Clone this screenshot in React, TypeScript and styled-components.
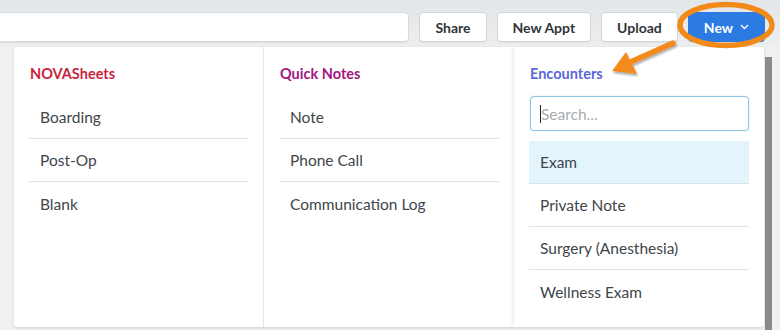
import React from 'react';
import styled, { createGlobalStyle } from 'styled-components';

const GlobalStyle = createGlobalStyle`
  html, body {
    margin: 0;
    padding: 0;
    background: #eef0f2;
  }
  * {
    box-sizing: border-box;
  }
`;

const Page = styled.div`
  width: 780px;
  height: 330px;
  position: relative;
  overflow: hidden;
  background: #eef0f2;
  font-family: Lato, "Liberation Sans", sans-serif;
`;

const Toolbar = styled.div`
  height: 47px;
  padding: 12px 15px 0 0;
  display: flex;
  align-items: flex-start;
  gap: 10px;
  background: linear-gradient(180deg, #e3e6e8 0%, #eceef0 100%);
`;

const SearchBar = styled.div`
  flex: 1;
  height: 30px;
  margin-left: -10px;
  background: #fff;
  border: 1px solid #d6d9dc;
  border-radius: 4px;
  box-shadow: 0 1px 1px rgba(0, 0, 0, 0.06);
`;

const Button = styled.button<{ $primary?: boolean }>`
  height: 30px;
  padding: 0 15px;
  display: flex;
  align-items: center;
  gap: 7px;
  border-radius: 4px;
  border: 1px solid ${(p) => (p.$primary ? '#2a78de' : '#d3d6d9')};
  background: ${(p) => (p.$primary ? '#2b7be2' : '#ffffff')};
  color: ${(p) => (p.$primary ? '#ffffff' : '#2f353a')};
  font-family: Lato, "Liberation Sans", sans-serif;
  font-size: 14px;
  font-weight: 700;
  box-shadow: 0 1px 1px rgba(0, 0, 0, 0.05);
`;

const Body = styled.div`
  display: flex;
  padding-left: 14px;
  gap: 1px;
`;

const Panel = styled.div`
  width: 750px;
  height: 280px;
  display: flex;
  background: #fff;
  border-radius: 3px;
  box-shadow: 0 1px 3px rgba(0, 0, 0, 0.12);
  overflow: hidden;
`;

const Scrollbar = styled.div`
  width: 7px;
  height: 280px;
  margin-top: 10px;
  background: #8a8a8a;
`;

const Column = styled.div<{ $raised?: boolean; $divider?: boolean }>`
  width: 250px;
  padding: 17px 15px 0 15px;
  display: flex;
  flex-direction: column;
  border-right: ${(p) => (p.$divider ? '1px solid #e6e6e6' : 'none')};
  box-shadow: ${(p) => (p.$raised ? '-2px 0 4px rgba(0, 0, 0, 0.07)' : 'none')};
`;

const Heading = styled.div<{ $color: string }>`
  height: 20px;
  line-height: 20px;
  padding-left: 1px;
  margin-bottom: 12px;
  font-size: 14.5px;
  font-weight: 700;
  color: ${(p) => p.$color};
`;

const Item = styled.div<{ $active?: boolean }>`
  height: 43px;
  padding-left: 11px;
  display: flex;
  align-items: center;
  font-size: 15.5px;
  color: #40464b;
  background: ${(p) => (p.$active ? '#e3f4fd' : 'transparent')};
  border-bottom: 1px solid ${(p) => (p.$active ? '#d5e3ea' : '#e2e2e2')};
  &:last-child {
    border-bottom: none;
  }
`;

const SearchWrap = styled.div`
  position: relative;
  height: 35px;
  margin: 0 0 10px 1px;
`;

const SearchInput = styled.input`
  width: 100%;
  height: 35px;
  padding: 0 10px;
  border: 1px solid #8ec3e4;
  border-radius: 4px;
  box-shadow: 0 0 2px rgba(100, 170, 220, 0.35);
  font-family: Lato, "Liberation Sans", sans-serif;
  font-size: 15.5px;
  color: #444;
  outline: none;
  &::placeholder {
    color: #a9adb1;
  }
`;

const Caret = styled.span`
  position: absolute;
  left: 10px;
  top: 9px;
  width: 1px;
  height: 18px;
  background: #222;
`;

const Annotation = styled.svg`
  position: absolute;
  left: 0;
  top: 0;
  pointer-events: none;
`;

const Chevron = () => (
  <svg width="9" height="6" viewBox="0 0 9 6">
    <path d="M1 1l3.5 3.5L8 1" fill="none" stroke="#fff" strokeWidth="1.4" />
  </svg>
);

const columns = [
  { title: 'NOVASheets', color: '#c8243d', items: ['Boarding', 'Post-Op', 'Blank'] },
  { title: 'Quick Notes', color: '#a3187f', items: ['Note', 'Phone Call', 'Communication Log'] },
];

const encounters = ['Exam', 'Private Note', 'Surgery (Anesthesia)', 'Wellness Exam'];

export default function App() {
  return (
    <Page>
      <GlobalStyle />
      <Toolbar>
        <SearchBar />
        <Button>Share</Button>
        <Button>New Appt</Button>
        <Button>Upload</Button>
        <Button $primary>
          New <Chevron />
        </Button>
      </Toolbar>
      <Body>
        <Panel>
          {columns.map((col, i) => (
            <Column key={col.title} $divider={i === 0}>
              <Heading $color={col.color}>{col.title}</Heading>
              {col.items.map((it) => (
                <Item key={it}>{it}</Item>
              ))}
            </Column>
          ))}
          <Column $raised>
            <Heading $color="#5a68d8">Encounters</Heading>
            <SearchWrap>
              <SearchInput placeholder="Search..." />
              <Caret />
            </SearchWrap>
            {encounters.map((it, i) => (
              <Item key={it} $active={i === 0}>
                {it}
              </Item>
            ))}
          </Column>
        </Panel>
        <Scrollbar />
      </Body>
      <Annotation width="780" height="330" viewBox="0 0 780 330">
        <defs>
          <filter id="sh" x="-20%" y="-20%" width="140%" height="140%">
            <feDropShadow dx="1" dy="2" stdDeviation="1.2" floodColor="#000" floodOpacity="0.35" />
          </filter>
        </defs>
        <ellipse cx="726" cy="25" rx="46" ry="20.5" fill="none" stroke="#f28a1a" strokeWidth="5.5" />
        <g filter="url(#sh)">
          <line x1="673" y1="43" x2="626" y2="64" stroke="#f28a1a" strokeWidth="5.5" strokeLinecap="round" />
          <path d="M612 71 L626 52 L637 74 Z" fill="#f28a1a" />
        </g>
      </Annotation>
    </Page>
  );
}
